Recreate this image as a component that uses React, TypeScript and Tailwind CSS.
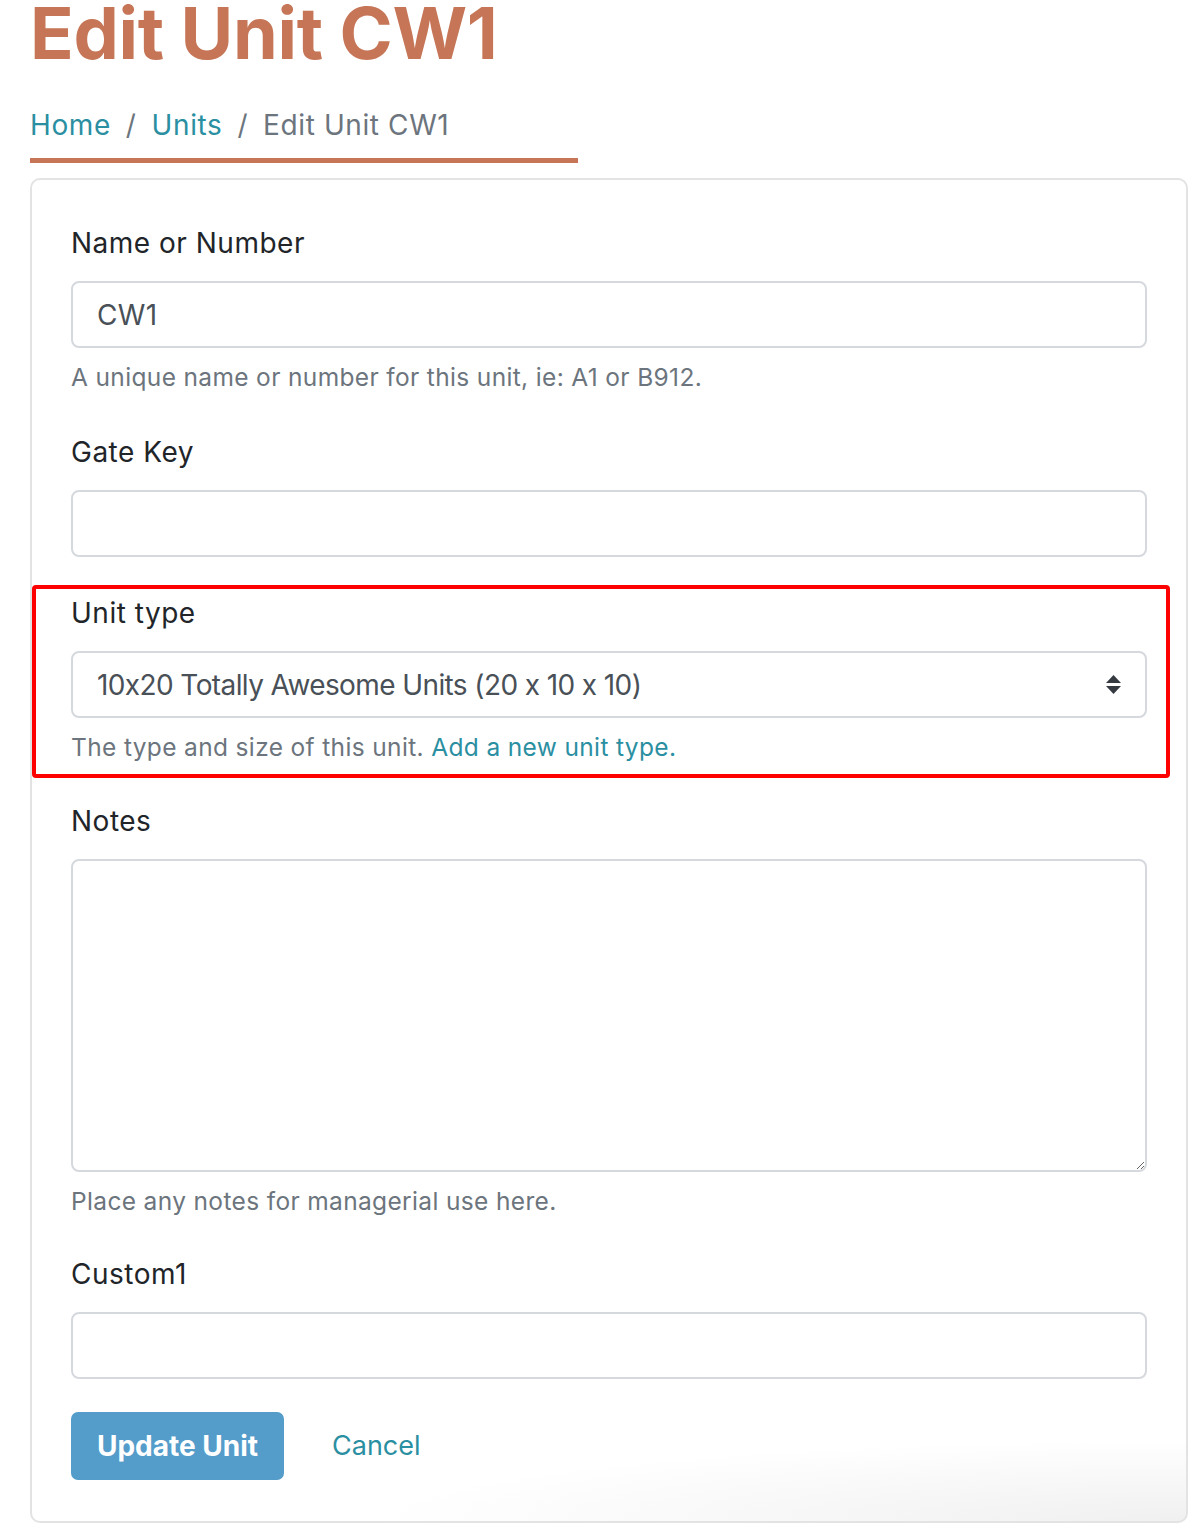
import React from "react";

const font = "font-['Inter','Noto_Sans',sans-serif] [font-feature-settings:'calt'_0]";

function Label({ children }: { children: React.ReactNode }) {
  return (
    <label className="block text-[28px] leading-[42px] tracking-[0.5px] text-[#212529] mb-[17px]">
      {children}
    </label>
  );
}

function Help({ children }: { children: React.ReactNode }) {
  return <div className="mt-[11px] text-[24.5px] leading-[36px] tracking-[0.35px] text-[#6c757d]">{children}</div>;
}

const fieldCls =
  "block w-full h-[67px] rounded-[8px] border-2 border-[#d5d9de] bg-white px-[24px] text-[28px] text-[#495057] outline-none";

export default function App() {
  return (
    <div className={`${font} min-h-[1526px] bg-white pl-[30px] overflow-hidden`}>
      <h1 className="mt-[-3px] h-[72px] text-[72px] leading-none font-bold tracking-[-0.3px] text-[#c67556]">
        Edit Unit CW1
      </h1>

      <nav className="mt-[35px] w-[548px] border-b-[5px] border-[#c67556] pb-[12px]">
        <ol className="flex items-center text-[28px] leading-[42px] tracking-[0.6px]">
          <li><a className="text-[#2b8fa2]" href="#">Home</a></li>
          <li className="px-[15px] text-[#6c757d]">/</li>
          <li><a className="text-[#2b8fa2]" href="#">Units</a></li>
          <li className="px-[15px] text-[#6c757d]">/</li>
          <li className="text-[#6c757d]">Edit Unit CW1</li>
        </ol>
      </nav>

      <div className="mt-[15px] w-[1158px] rounded-[10px] border-2 border-[#e3e3e3] bg-[radial-gradient(70%_6%_at_100%_100%,#f0f0f0,#ffffff)] px-[39px] pt-[42px] pb-[41px]">
        <div>
          <Label>Name or Number</Label>
          <input className={`${fieldCls} tracking-[0.3px]`} defaultValue="CW1" />
          <Help>A unique name or number for this unit, ie: A1 or B912.</Help>
        </div>

        <div className="mt-[36px]">
          <Label>Gate Key</Label>
          <input className={fieldCls} defaultValue="" />
        </div>

        {/* highlighted group */}
        <div className="mt-[28px] ml-[-39px] mr-[-23px] rounded-[4px] border-4 border-[#ff0000] pl-[35px] pr-[19px] pt-[3px] pb-[9px]">
          <Label>Unit type</Label>
          <div className="relative">
            <select className={`${fieldCls} appearance-none tracking-[-0.6px]`} defaultValue="a">
              <option value="a">10x20 Totally Awesome Units (20 x 10 x 10)</option>
            </select>
            <svg
              className="pointer-events-none absolute right-[25px] top-[23px]"
              width="17"
              height="21"
              viewBox="0 0 17 21"
            >
              <path d="M8.5 1 L16 9 L1 9 Z" fill="#343a40" />
              <path d="M8.5 20 L16 12 L1 12 Z" fill="#343a40" />
            </svg>
          </div>
          <Help>
            The type and size of this unit.{" "}
            <a href="#" className="text-[#2b8fa2]">Add a new unit type.</a>
          </Help>
        </div>

        <div className="mt-[22px]">
          <Label>Notes</Label>
          <textarea className="block w-full h-[313px] rounded-[8px] border-2 border-[#d5d9de] bg-white px-[24px] py-[12px] text-[28px] text-[#495057] outline-none resize-y" />
          <Help>Place any notes for managerial use here.</Help>
        </div>

        <div className="mt-[34px]">
          <Label>Custom1</Label>
          <input className={fieldCls} defaultValue="" />
        </div>

        <div className="mt-[33px] flex items-center">
          <button className="h-[68px] w-[213px] rounded-[7px] bg-[#549cca] text-[28px] font-bold text-white">
            Update Unit
          </button>
          <a href="#" className="ml-[48px] text-[27px] text-[#2b8fa2]">Cancel</a>
        </div>
      </div>
    </div>
  );
}
